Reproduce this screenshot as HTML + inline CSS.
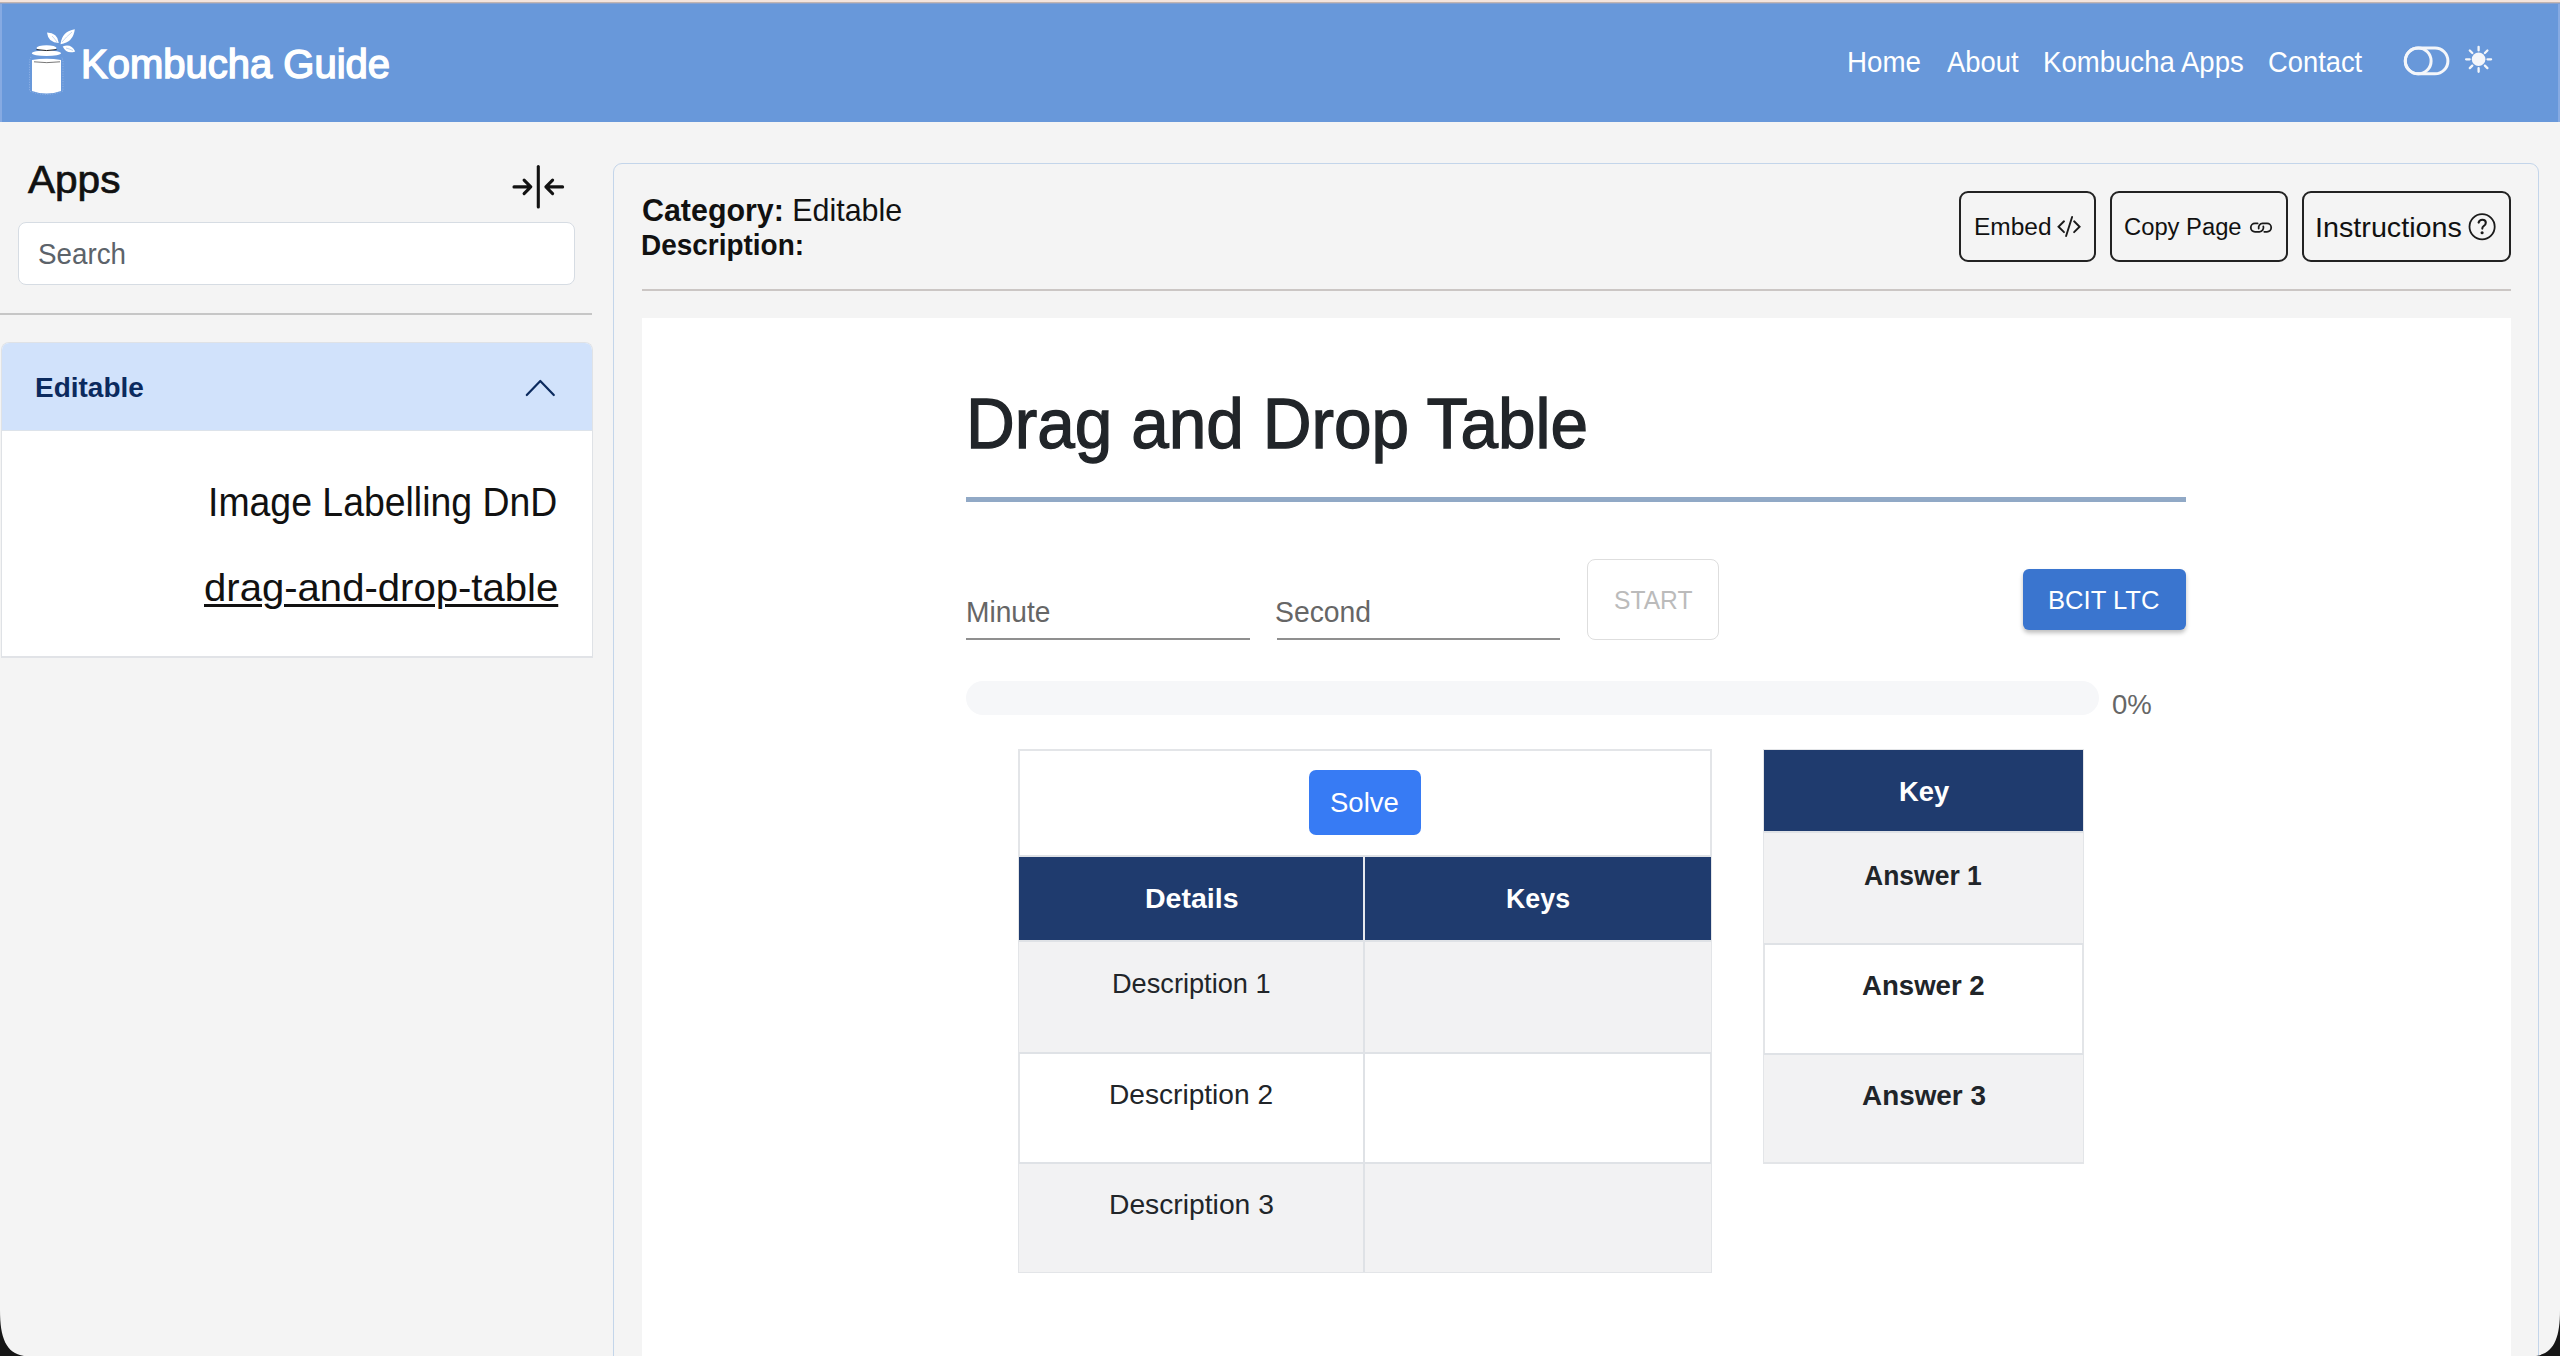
<!DOCTYPE html>
<html><head><meta charset="utf-8">
<style>
*{box-sizing:border-box;margin:0;padding:0}
html,body{width:2560px;height:1356px;overflow:hidden}
body{background:#f4f4f4;font-family:"Liberation Sans",sans-serif;position:relative;color:#111}
.abs{position:absolute}
.btn{position:absolute;border:2px solid #222;border-radius:9px}
.t{position:absolute;white-space:nowrap;line-height:1}
</style></head>
<body>

<div class="abs" style="left:0;top:0;width:2560px;height:4px;background:linear-gradient(#f4e4dc 0,#f4e4dc 2px,#c2b4b0 2px,#c2b4b0 3px,#8aa2cc 3px,#8aa2cc 4px)"></div>
<div class="abs" style="left:0;top:4px;width:2560px;height:118px;background:#6898da"></div>
<div class="abs" style="left:0;top:4px;width:2px;height:118px;background:#86aae2"></div>
<div class="abs" style="right:0;top:4px;width:2px;height:118px;background:#86aae2"></div>

<svg class="abs" style="left:24px;top:24px" width="60" height="76" viewBox="24 24 60 76">
  <g fill="#fff">
    <path d="M32 60 Q46.5 57.5 61 60 V91 Q46.5 96 32 91 Z"/>
    <ellipse cx="46.4" cy="53.3" rx="14.6" ry="2.8"/>
    <ellipse cx="46.5" cy="48.1" rx="10" ry="2.8"/>
    <path d="M47 32.5 Q57.6 32.5 58.8 43 Q48.2 43 47 32.5 Z"/>
    <path d="M74.8 29.3 Q73.4 42.3 60.5 44.3 Q61.9 31.3 74.8 29.3 Z"/>
    <path d="M62.7 46.4 Q71.2 43.3 75.2 51.4 Q66.7 54.5 62.7 46.4 Z"/>
  </g>
  <path d="M36.5 49.6 Q46.5 51.5 56.6 49.6" stroke="#222" stroke-width="1" fill="none"/>
  <path d="M34 61.8 Q46.5 63.5 60 61.8" stroke="#555" stroke-width="0.8" fill="none"/>
  <path d="M52 36 Q55 39 57 42 M72 32 Q66 37 62 42 M66 48 Q70 49 73 50.5" stroke="#9bbbe6" stroke-width="0.6" fill="none"/>
  <path d="M31 57 Q29 60 29.5 66 V91 Q46.5 98 63 91 V66 Q63.5 60 61.5 57" stroke="#b8cff0" stroke-width="0.5" stroke-dasharray="1 1.5" fill="none"/>
</svg>

<!-- toggle + sun -->
<svg class="abs" style="left:2400px;top:40px" width="100" height="42" viewBox="2400 40 100 42">
  <rect x="2405.3" y="48" width="42.6" height="25.8" rx="12.9" stroke="#f4f6fa" stroke-width="3" fill="none"/>
  <circle cx="2418.2" cy="60.9" r="12.9" stroke="#f4f6fa" stroke-width="3" fill="none"/>
  <circle cx="2478.6" cy="59.3" r="6.8" fill="#f4f6fa"/>
  <g stroke="#f4f6fa" stroke-width="2.3" stroke-linecap="round">
    <path d="M2478.6 46.8 V50.4 M2478.6 68.2 V71.8 M2466.1 59.3 H2469.7 M2487.5 59.3 H2491.1 M2469.8 50.5 L2472.3 53 M2484.9 65.6 L2487.4 68.1 M2469.8 68.1 L2472.3 65.6 M2484.9 53 L2487.4 50.5"/>
  </g>
</svg>

<!-- sidebar -->
<svg class="abs" style="left:505px;top:160px" width="66" height="54" viewBox="505 160 66 54">
  <g stroke="#121212" stroke-width="3.1" fill="none" stroke-linecap="round" stroke-linejoin="round">
    <path d="M538.3 166.6 V206.9"/>
    <path d="M514 186.9 H530.5 M524.1 180.2 L530.8 186.9 L524.1 193.6"/>
    <path d="M562.6 186.9 H546 M552.6 180.2 L545.9 186.9 L552.6 193.6"/>
  </g>
</svg>
<div class="abs" style="left:18px;top:222px;width:557px;height:63px;background:#fff;border:1.5px solid #d6dce3;border-radius:8px"></div>
<div class="abs" style="left:0;top:312.5px;width:592px;height:2.5px;background:#c6c6c6"></div>
<div class="abs" style="left:0.5px;top:342px;width:592px;height:316px;background:#fff;border-radius:8px 8px 0 0;overflow:hidden;border:1.5px solid #dfe2e6;border-bottom:2px solid #e1e3e7">
  <div class="abs" style="left:0;top:0;width:592px;height:88px;background:#d1e2fb;border-bottom:1.5px solid #dde3ea"></div>
</div>
<svg class="abs" style="left:520px;top:374px" width="40" height="28" viewBox="520 374 40 28">
  <path d="M526.8 395 L540.3 381 L553.8 395" stroke="#0b2a5e" stroke-width="2.2" fill="none" stroke-linecap="round" stroke-linejoin="round"/>
</svg>

<!-- main container -->
<div class="abs" style="left:613px;top:163px;width:1926px;height:1300px;border:1.5px solid #c3d5ea;border-radius:9px"></div>
<div class="abs" style="left:642px;top:289px;width:1869px;height:2px;background:#cbc6c4"></div>
<div class="abs" style="left:642px;top:318px;width:1869px;height:1100px;background:#fff"></div>
<div class="abs" style="left:966px;top:497px;width:1220px;height:5px;background:#91a9c6"></div>

<!-- action buttons -->
<div class="btn" style="left:1959px;top:191px;width:137px;height:71px"></div>
<svg class="abs" style="left:2050px;top:205px" width="40" height="40" viewBox="2050 205 40 40"><path d="M2064 221.3 L2058.5 226.7 L2064 232.2 M2074.1 221.3 L2079.6 226.7 L2074.1 232.2 M2072.1 217 L2066.1 236" stroke="#1a1a1a" stroke-width="1.9" fill="none" stroke-linecap="round" stroke-linejoin="miter"/></svg>
<div class="btn" style="left:2110px;top:191px;width:178px;height:71px"></div>
<svg class="abs" style="left:2245px;top:210px" width="40" height="35" viewBox="2245 210 40 35"><g stroke="#1a1a1a" stroke-width="1.8" fill="none" stroke-linecap="round"><path d="M2257.6 223.4 H2255 A4.2 4.2 0 0 0 2255 231.8 H2259.4 A4.2 4.2 0 0 0 2263.3 226.3"/><path d="M2258.7 228.5 A4.2 4.2 0 0 1 2262.6 223.4 H2267 A4.2 4.2 0 0 1 2267 231.8 H2264.3"/></g></svg>
<div class="btn" style="left:2302px;top:191px;width:209px;height:71px"></div>
<svg class="abs" style="left:2462px;top:208px" width="40" height="40" viewBox="2462 208 40 40"><circle cx="2482.1" cy="226.7" r="12.6" stroke="#1a1a1a" stroke-width="1.8" fill="none"/><path d="M2478.6 222.6 Q2479.4 219.7 2482.3 219.7 Q2485.8 219.7 2485.8 222.8 Q2485.8 224.9 2483.6 226.2 Q2482.3 227 2482.3 228.6" stroke="#1a1a1a" stroke-width="2.1" fill="none" stroke-linecap="round"/><circle cx="2482.1" cy="232.7" r="1.55" fill="#1a1a1a"/></svg>

<!-- timer row -->
<div class="abs" style="left:966px;top:638px;width:284px;height:2px;background:#8f8f8f"></div>
<div class="abs" style="left:1277px;top:638px;width:283px;height:2px;background:#8f8f8f"></div>
<div class="abs" style="left:1587px;top:559px;width:132px;height:81px;border:1.5px solid #dedede;border-radius:8px"></div>
<div class="abs" style="left:2023px;top:569px;width:163px;height:61px;background:#3a75cf;border-radius:6px;box-shadow:0 3px 4px rgba(0,0,0,.25)"></div>

<!-- progress -->
<div class="abs" style="left:966px;top:681px;width:1133px;height:34px;background:#f6f7f9;border-radius:17px"></div>

<!-- main table -->
<div class="abs" style="left:1018px;top:749px;width:694px;height:524px;border:2px solid #e3e5e8;background:#fff"></div>
<div class="abs" style="left:1309px;top:770px;width:112px;height:64.5px;background:#377bf4;border-radius:7px"></div>
<div class="abs" style="left:1019px;top:855px;width:692px;height:2px;background:#dfe2e6"></div>
<div class="abs" style="left:1019px;top:857px;width:692px;height:83px;background:#1f3b6e"></div>
<div class="abs" style="left:1363px;top:857px;width:2px;height:83px;background:#e6e9ee"></div>
<div class="abs" style="left:1019px;top:940px;width:692px;height:2px;background:#dfe2e6"></div>
<div class="abs" style="left:1019px;top:942px;width:692px;height:110px;background:#f2f2f3"></div>
<div class="abs" style="left:1019px;top:1052px;width:692px;height:2px;background:#dfe2e6"></div>
<div class="abs" style="left:1019px;top:1162px;width:692px;height:2px;background:#dfe2e6"></div>
<div class="abs" style="left:1019px;top:1164px;width:692px;height:108px;background:#f2f2f3"></div>
<div class="abs" style="left:1363px;top:940px;width:2px;height:332px;background:#dfe2e6"></div>

<!-- key table -->
<div class="abs" style="left:1763px;top:749px;width:321px;height:415px;border:2px solid #e3e5e8;background:#fff"></div>
<div class="abs" style="left:1764px;top:750px;width:319px;height:81px;background:#1f3b6e"></div>
<div class="abs" style="left:1764px;top:831px;width:319px;height:2px;background:#dfe2e6"></div>
<div class="abs" style="left:1764px;top:833px;width:319px;height:110px;background:#f2f2f3"></div>
<div class="abs" style="left:1764px;top:943px;width:319px;height:2px;background:#dfe2e6"></div>
<div class="abs" style="left:1764px;top:1053px;width:319px;height:2px;background:#dfe2e6"></div>
<div class="abs" style="left:1764px;top:1055px;width:319px;height:107px;background:#f2f2f3"></div>

<!-- bottom corners -->
<svg class="abs" style="left:0;top:1300px" width="60" height="56" viewBox="0 1300 60 56"><path d="M0 1310 C0 1338 6 1353 24 1356 L0 1356 Z" fill="#161616"/></svg>
<svg class="abs" style="left:2500px;top:1300px" width="60" height="56" viewBox="2500 1300 60 56"><path d="M2560 1310 C2560 1338 2554 1353 2536 1356 L2560 1356 Z" fill="#161616"/></svg>

<div class="t" style="left:81.00px;top:44.00px;font-size:41.00px;color:#fff;transform:scaleX(0.9755);transform-origin:0 0;-webkit-text-stroke:1.5px #fff">Kombucha Guide</div>
<div class="t" style="left:1847.00px;top:47.50px;font-size:29.13px;color:#fff;transform:scaleX(0.9519);transform-origin:0 0">Home</div>
<div class="t" style="left:1947.00px;top:47.50px;font-size:29.13px;color:#fff;transform:scaleX(0.9400);transform-origin:0 0">About</div>
<div class="t" style="left:2043.00px;top:47.50px;font-size:29.13px;color:#fff;transform:scaleX(0.9466);transform-origin:0 0">Kombucha Apps</div>
<div class="t" style="left:2268.00px;top:47.50px;font-size:29.13px;color:#fff;transform:scaleX(0.9387);transform-origin:0 0">Contact</div>
<div class="t" style="left:28.00px;top:159.90px;font-size:39.50px;color:#111;transform:scaleX(1.0271);transform-origin:0 0;-webkit-text-stroke:0.7px #111">Apps</div>
<div class="t" style="left:38.00px;top:239.00px;font-size:29.42px;color:#5c636a;transform:scaleX(0.9439);transform-origin:0 0">Search</div>
<div class="t" style="left:34.50px;top:372.50px;font-size:28.26px;color:#0b2a5e;transform:scaleX(0.9907);transform-origin:0 0;font-weight:bold">Editable</div>
<div class="t" style="left:208.20px;top:482.60px;font-size:40.29px;color:#111;transform:scaleX(0.9285);transform-origin:0 0">Image Labelling DnD</div>
<div class="t" style="left:203.90px;top:568.10px;font-size:39.18px;color:#111;transform:scaleX(1.0231);transform-origin:0 0;text-decoration:underline;text-underline-offset:3px;text-decoration-thickness:2.6px">drag-and-drop-table</div>
<div class="t" style="left:642.00px;top:194.50px;font-size:31.59px;color:#111;transform:scaleX(0.9626);transform-origin:0 0"><b>Category:</b> Editable</div>
<div class="t" style="left:641.00px;top:230.00px;font-size:29.71px;color:#111;transform:scaleX(0.9409);transform-origin:0 0;font-weight:bold">Description:</div>
<div class="t" style="left:1974.00px;top:215.00px;font-size:24.49px;color:#111">Embed</div>
<div class="t" style="left:2124.40px;top:215.00px;font-size:24.49px;color:#111;transform:scaleX(0.9705);transform-origin:0 0">Copy Page</div>
<div class="t" style="left:2315.00px;top:214.00px;font-size:27.83px;color:#111;transform:scaleX(1.0325);transform-origin:0 0">Instructions</div>
<div class="t" style="left:966.40px;top:389.20px;font-size:70.00px;color:#212529;transform:scaleX(0.9650);transform-origin:0 0;-webkit-text-stroke:1.3px #212529">Drag and Drop Table</div>
<div class="t" style="left:965.50px;top:596.50px;font-size:29.71px;color:#666;transform:scaleX(0.9472);transform-origin:0 0">Minute</div>
<div class="t" style="left:1275.00px;top:596.50px;font-size:29.71px;color:#666;transform:scaleX(0.9538);transform-origin:0 0">Second</div>
<div class="t" style="left:1614.00px;top:586.50px;font-size:26.09px;color:#bbb;transform:scaleX(0.9446);transform-origin:0 0">START</div>
<div class="t" style="left:2048.00px;top:586.50px;font-size:26.09px;color:#fff;transform:scaleX(0.9817);transform-origin:0 0">BCIT LTC</div>
<div class="t" style="left:2112.00px;top:691.50px;font-size:26.81px;color:#666;transform:scaleX(1.0270);transform-origin:0 0">0%</div>
<div class="t" style="left:1330.00px;top:788.00px;font-size:28.55px;color:#fff;transform:scaleX(0.9635);transform-origin:0 0">Solve</div>
<div class="t" style="left:1145.00px;top:884.00px;font-size:28.55px;color:#fff;font-weight:bold">Details</div>
<div class="t" style="left:1506.00px;top:884.00px;font-size:28.55px;color:#fff;transform:scaleX(0.9385);transform-origin:0 0;font-weight:bold">Keys</div>
<div class="t" style="left:1112.00px;top:970.00px;font-size:27.80px;color:#212529;transform:scaleX(0.9773);transform-origin:0 0">Description 1</div>
<div class="t" style="left:1109.20px;top:1080.90px;font-size:27.80px;color:#212529;transform:scaleX(1.0114);transform-origin:0 0">Description 2</div>
<div class="t" style="left:1109.00px;top:1191.00px;font-size:27.80px;color:#212529;transform:scaleX(1.0164);transform-origin:0 0">Description 3</div>
<div class="t" style="left:1898.50px;top:778.00px;font-size:27.10px;color:#fff;transform:scaleX(1.0105);transform-origin:0 0;font-weight:bold">Key</div>
<div class="t" style="left:1864.00px;top:862.00px;font-size:27.60px;color:#212529;transform:scaleX(0.9604);transform-origin:0 0;font-weight:bold">Answer 1</div>
<div class="t" style="left:1862.00px;top:972.30px;font-size:27.60px;color:#212529;font-weight:bold">Answer 2</div>
<div class="t" style="left:1861.90px;top:1082.10px;font-size:27.60px;color:#212529;transform:scaleX(1.0101);transform-origin:0 0;font-weight:bold">Answer 3</div>
</body></html>
